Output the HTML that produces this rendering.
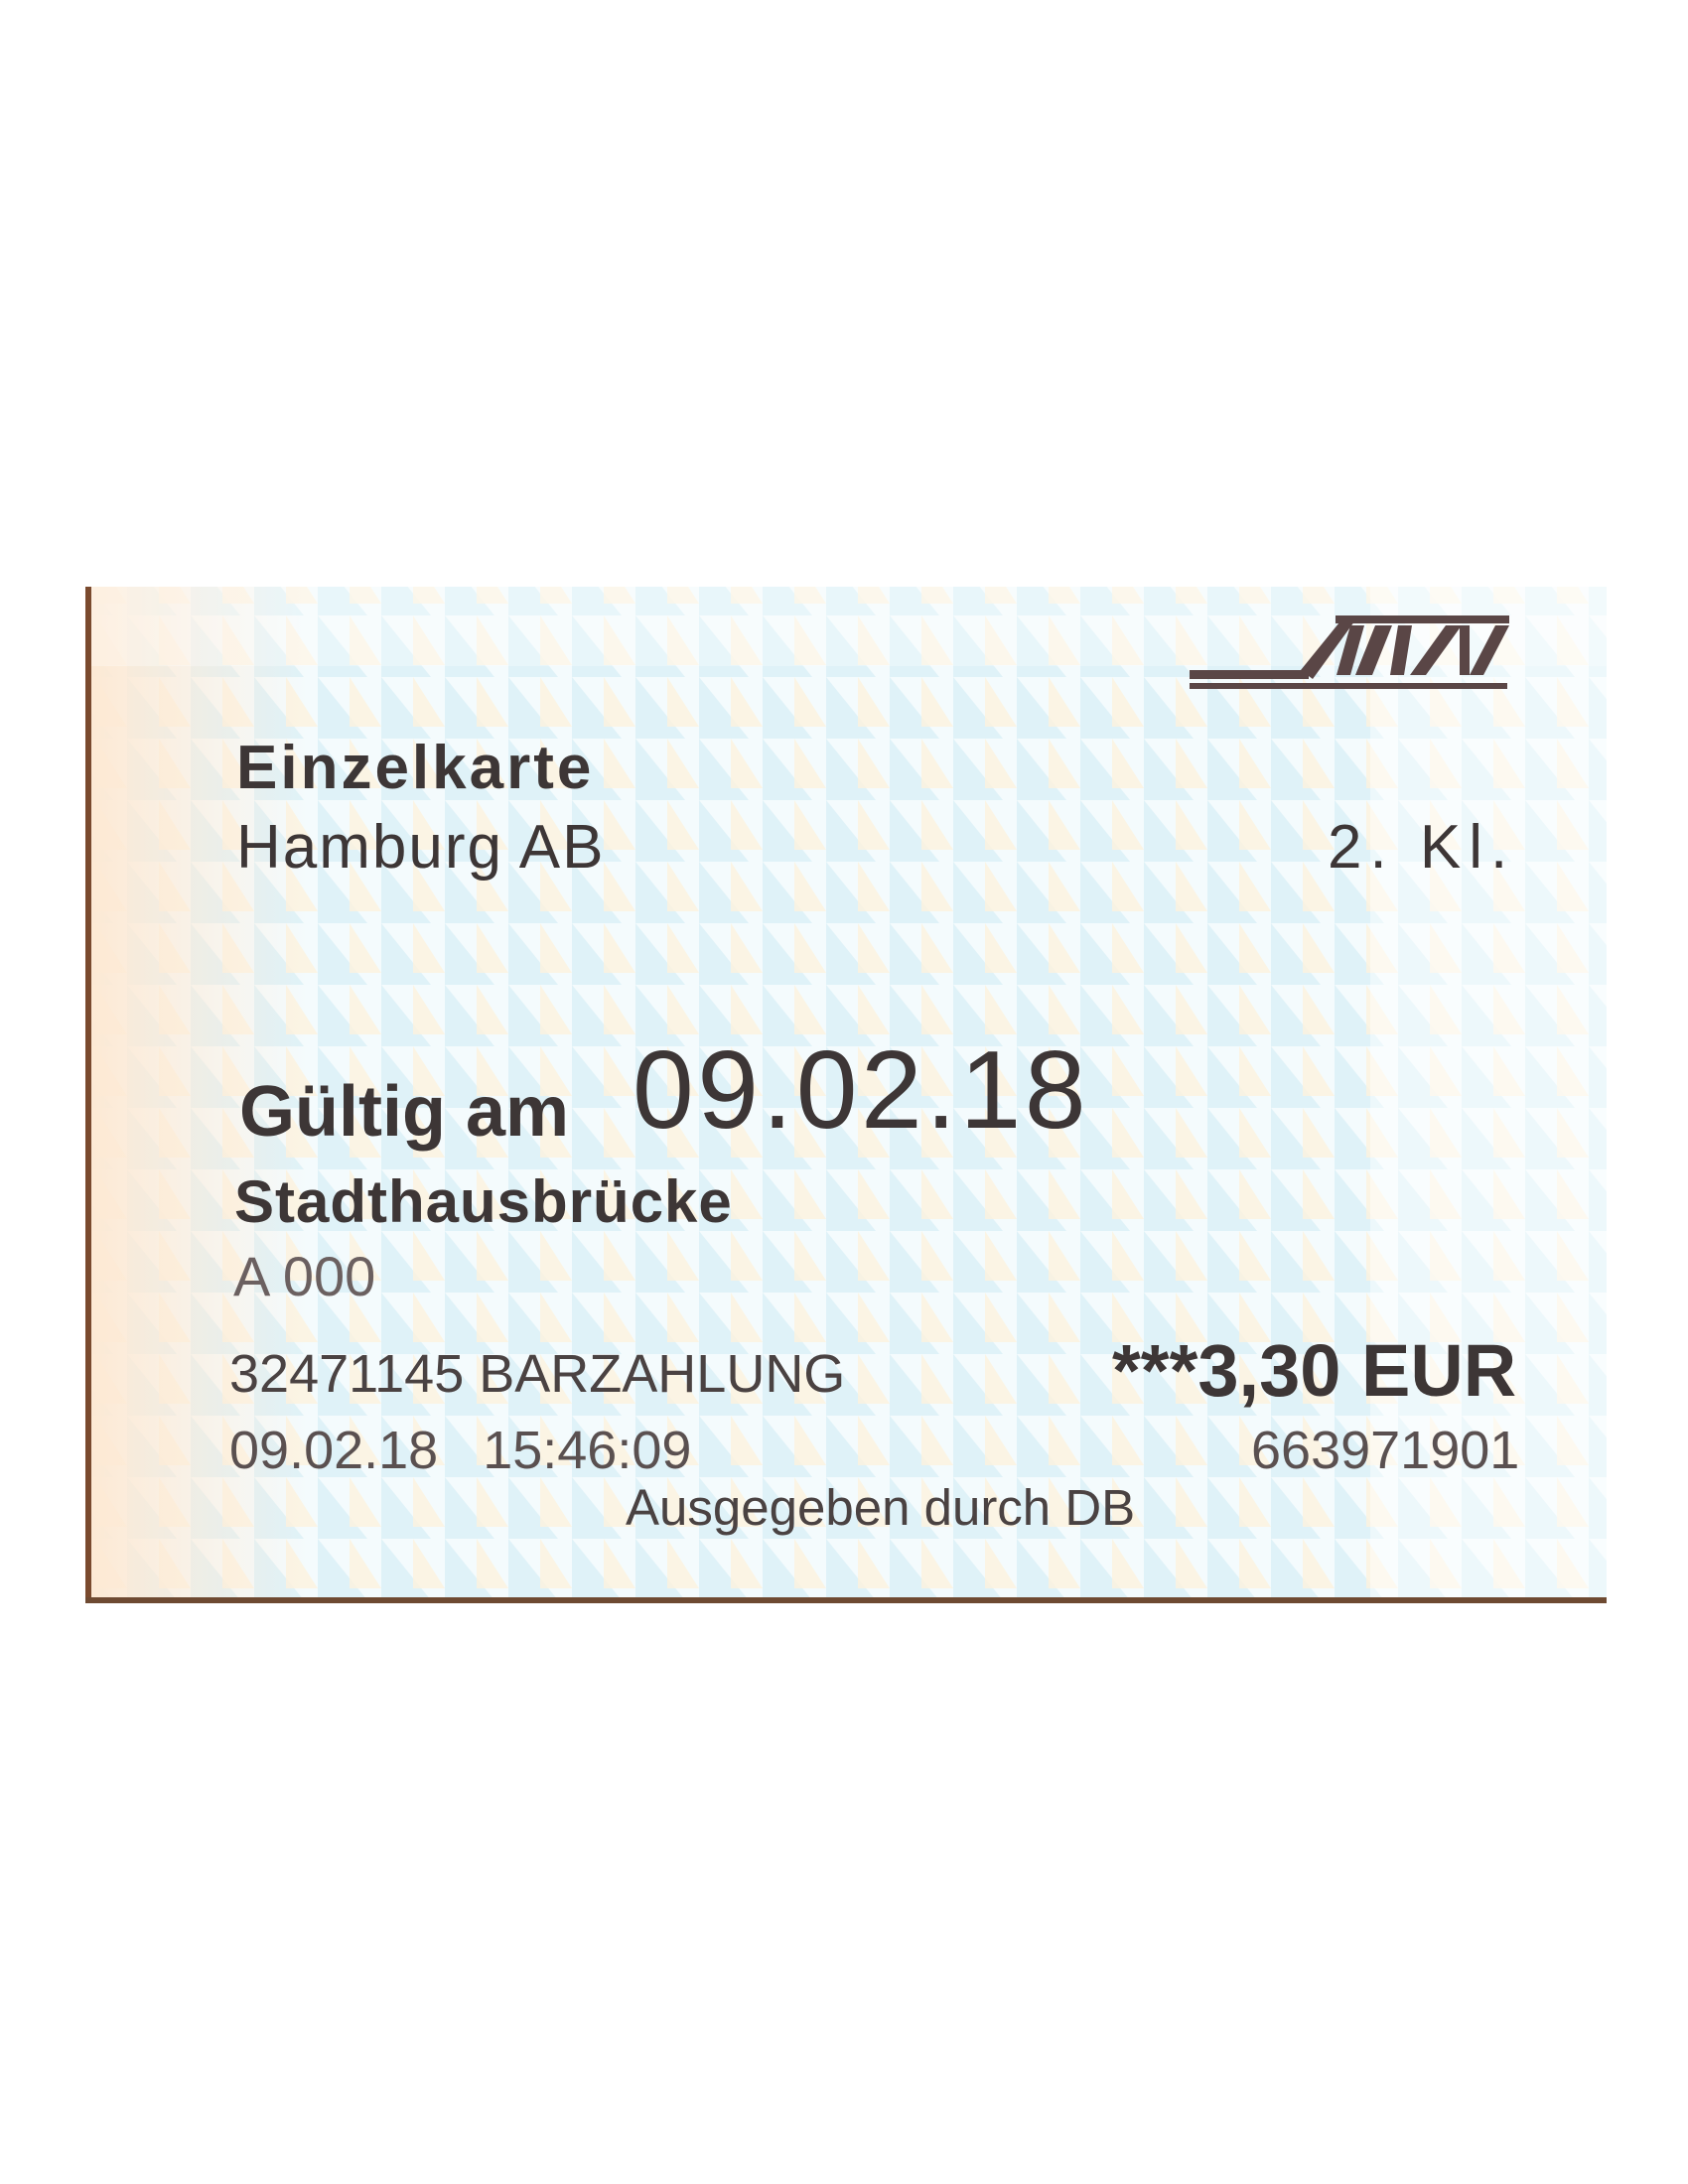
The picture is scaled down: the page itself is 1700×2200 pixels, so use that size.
<!DOCTYPE html>
<html><head><meta charset="utf-8"><style>
html,body{margin:0;padding:0;background:#fff;width:1700px;height:2200px;overflow:hidden}
.t{position:absolute;font-family:"Liberation Sans",sans-serif;color:#3d3636;white-space:nowrap;line-height:1}
</style></head><body>
<svg style="position:absolute;left:0;top:0" width="1700" height="2200">
<defs>
<pattern id="p" x="0" y="0" width="64" height="62" patternUnits="userSpaceOnUse">
<rect width="64" height="62" fill="#f4fbfd"/>
<polygon points="0,0 0,62 50,62" fill="#dff2f8"/>
<polygon points="32,0 32,50 64,50" fill="#fcf3dd" opacity="0.8"/>
</pattern>
<linearGradient id="o" x1="0" x2="1"><stop offset="0" stop-color="#fde9d4"/><stop offset="1" stop-color="#fde9d4" stop-opacity="0"/></linearGradient>
</defs>
<rect x="89" y="591" width="1529" height="1022" fill="url(#p)"/>
<rect x="1380" y="591" width="238" height="1022" fill="#fff" opacity="0.45"/>
<rect x="89" y="591" width="220" height="1022" fill="url(#o)"/>
<rect x="89" y="591" width="1529" height="80" fill="#fff" opacity="0.3"/>
<rect x="86" y="591" width="6" height="1022" fill="#7a4a2e"/>
<rect x="86" y="1609" width="1532" height="6" fill="#6e4a32"/>
<g fill="#5a4646">
<rect x="1198" y="675" width="120" height="9"/>
<rect x="1198" y="688" width="320" height="6"/>
<polygon points="1310,675 1322,684 1367,622 1353,622"/>
<rect x="1345" y="620" width="175" height="8"/>
<polygon points="1346,680 1360,680 1374,630 1360,630"/>
<polygon points="1365,680 1382,680 1402,630 1385,630"/>
<polygon points="1400,680 1414,680 1422,630 1408,630"/>
<polygon points="1420,680 1436,680 1472,630 1456,630"/>
<rect x="1470" y="630" width="10" height="50"/>
<polygon points="1480,680 1494,680 1520,630 1506,630"/>
</g>
</svg>
<div class="t" style="left:238px;top:743px;font-size:62px;font-weight:bold;letter-spacing:3px">Einzelkarte</div>
<div class="t" style="left:238px;top:823px;font-size:62px;letter-spacing:2px">Hamburg AB</div>
<div class="t" style="left:1337px;top:823px;font-size:62px;letter-spacing:8px">2. Kl.</div>
<div class="t" style="left:241px;top:1084px;font-size:72px;font-weight:bold">Gültig am</div>
<div class="t" style="left:637px;top:1043px;font-size:111px;letter-spacing:3.5px">09.02.18</div>
<div class="t" style="left:236px;top:1181px;font-size:60px;font-weight:bold;letter-spacing:1px">Stadthausbrücke</div>
<div class="t" style="left:235px;top:1258px;font-size:56px;color:#6b6060">A 000</div>
<div class="t" style="left:231px;top:1357px;font-size:54px;color:#4a4242">32471145 BARZAHLUNG</div>
<div class="t" style="left:1120px;top:1344px;font-size:74px;font-weight:bold">***3,30 EUR</div>
<div class="t" style="left:231px;top:1434px;font-size:54px;color:#5a5050">09.02.18&nbsp;&nbsp; 15:46:09</div>
<div class="t" style="left:1260px;top:1434px;font-size:54px;color:#5a5050">663971901</div>
<div class="t" style="left:630px;top:1493px;font-size:51px;color:#4a4242">Ausgegeben durch DB</div>
</body></html>
